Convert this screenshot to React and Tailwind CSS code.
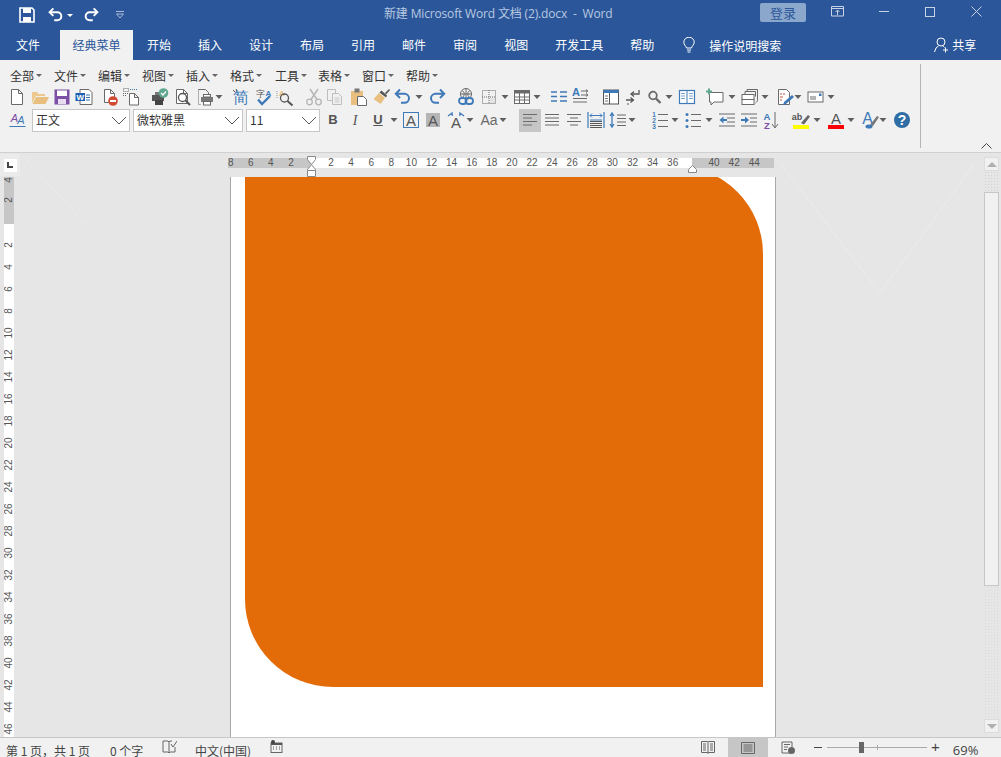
import React from "react";

const Svg = ({ c = "", children }) => (
  <svg viewBox="0 0 18 18" className={`w-[18px] h-[18px] shrink-0 block overflow-visible ${c}`} fill="none">{children}</svg>
);
const G = "#6a6a6a", B = "#3f7ab8", T = "#e8bf7f", P = "#7d4fa6";
const Dd = ({ c = "" }) => (
  <svg viewBox="0 0 8 4" className={`w-[8px] h-[4px] shrink-0 block ${c}`}><polygon points="0.5,0 7.5,0 4,4" fill="#5f5f5f" /></svg>
);
const Page = ({ x = 3.5, y = 1.5, w = 11, h = 15, s = G }) => (
  <path d={`M${x} ${y}h${w - 4}l4 4v${h - 4}h-${w}z M${x + w - 4} ${y}v4h4`} stroke={s} fill="#fff" />
);
const L = ({ d, s = G, w = 1, dash }) => <path d={d} stroke={s} strokeWidth={w} strokeDasharray={dash} />;
const Txt = ({ x, y, s = 12, f = G, w = 400, children, anchor = "middle" }) => (
  <text x={x} y={y} fontSize={s} fill={f} fontWeight={w} textAnchor={anchor} fontFamily="Liberation Sans, sans-serif">{children}</text>
);

const New = (p) => <Svg {...p}><Page /></Svg>;
const Open = (p) => <Svg {...p}><path d="M1 15V4h5l1.500 2H14v2H5L1 15z" fill="#eec98f" /><path d="M1.500 16L5 9h13l-3.500 7z" fill={T} /></Svg>;
const Save = (p) => <Svg {...p}><rect x="1.500" y="1.500" width="15" height="15" fill={P} /><rect x="4" y="2.500" width="10" height="5.500" fill="#fff" /><rect x="5" y="11" width="8" height="5" fill="#e8ddf0" /></Svg>;
const WordDoc = (p) => <Svg {...p}><path d="M5 1.500h9l3 3v12H5z" stroke={G} fill="#fff" /><L d="M11 7h4M11 9.500h4M11 12h4" s="#2f6fb5" /><rect x="0.500" y="5" width="9.500" height="8" fill="#1f5fb4" /><Txt x="5.200" y="12" s={8} f="#fff" w={700}>W</Txt></Svg>;
const PrintDel = (p) => <Svg {...p}><Page x={3.500} y={1.500} w={10} h={13} /><circle cx="12" cy="13" r="4.800" fill="#d24a32" /><rect x="9" y="12" width="6" height="2" fill="#fff" /></Svg>;
const CopyDots = (p) => <Svg {...p}><rect x="1.500" y="0.500" width="5" height="3" stroke={G} strokeDasharray="1 1" /><L d="M1 5.500h5M1 7.500h3" dash="1 1" /><L d="M8 1.500h7" s={B} dash="1 1" /><Page x={7.500} y={5.500} w={9} h={11.500} /></Svg>;
const PrintCheck = (p) => <Svg {...p}><rect x="1" y="7" width="12" height="6" fill="#555" /><rect x="4" y="12" width="8" height="5" fill="#444" /><rect x="4" y="4" width="6" height="3" fill="#777" /><circle cx="12.500" cy="5" r="4.800" fill="#5fa88f" /><path d="M10 5l2 2 3-3.500" stroke="#fff" strokeWidth="1.300" /></Svg>;
const Preview = (p) => <Svg {...p}><Page x={2.500} y={1.500} w={11} h={14} /><circle cx="8.500" cy="9.500" r="4" stroke="#555" strokeWidth="1.300" fill="#fff" /><L d="M11.500 12.500L16 17" s="#555" w={2} /></Svg>;
const PreviewPrint = (p) => <Svg {...p}><path d="M2.500 1.500h7l3 3v2" stroke={G} /><L d="M2.500 1.500v15h3" dash="1 1" /><rect x="5" y="9" width="12" height="5" fill="#777" /><rect x="7.500" y="6.500" width="7" height="2.500" stroke="#666" fill="#fff" /><rect x="7.500" y="13.500" width="7" height="3.500" stroke="#666" fill="#fff" /></Svg>;
const Jian = (p) => <Svg {...p}><Txt x="9" y="15" s={16} f={B}>简</Txt><L d="M1 2l2 2M4 1l1 2" s="#555" /></Svg>;
const ZiCheck = (p) => <Svg {...p}><Txt x="5.500" y="9" s={9} f="#555">字</Txt><Txt x="13.500" y="8" s={8} f={B} w={700}>A</Txt><path d="M3 11.500l4 4.500 8-8" stroke={B} strokeWidth="2.400" /></Svg>;
const FindA = (p) => <Svg {...p}><Txt x="6" y="8" s={8} f={T} w={700}>A</Txt><circle cx="8.500" cy="10" r="4" stroke="#555" strokeWidth="1.300" /><L d="M11.500 13l5 4.500" s="#555" w={2} /><L d="M1 3v8" s="#999" dash="1 1" /></Svg>;
const Cut = (p) => <Svg {...p}><circle cx="4.500" cy="14" r="2.800" stroke="#b5b5b5" strokeWidth="1.300" /><circle cx="13.500" cy="14" r="2.800" stroke="#b5b5b5" strokeWidth="1.300" /><L d="M6 11.500L13 1M12 11.500L5 1" s="#b5b5b5" w={1.500} /></Svg>;
const CopyG = (p) => <Svg {...p}><path d="M1.500 1.500h8v11h-8z" stroke="#bdbdbd" /><path d="M6.500 5.500h6l3 3v8h-9z" stroke="#bdbdbd" fill="#f1f1f1" /><L d="M8.500 10h5M8.500 12h5M8.500 14h5" s="#c9c9c9" /></Svg>;
const Paste = (p) => <Svg {...p}><rect x="1" y="3" width="12" height="14" fill={T} /><rect x="4.500" y="0.500" width="5" height="4" fill="#777" /><path d="M7.500 8.500h6l3 3v6h-9z" stroke={G} fill="#fff" /></Svg>;
const Brush = (p) => <Svg {...p}><path d="M13 5L17 1l1 1-4 4.500z" fill="#555" /><path d="M7 5l6 5-4.500 6L1.500 11z" fill={T} /><path d="M7.500 4.500l6.500 5 1-2-5.500-5z" fill="#555" /></Svg>;
const Undo = (p) => <Svg {...p}><path d="M6 1.500L1.800 5.800 6 10" stroke={B} strokeWidth="2" /><path d="M2.500 5.800h8a4.500 4.500 0 0 1 0 9H7" stroke={B} strokeWidth="2" /></Svg>;
const Redo = (p) => <Svg {...p}><path d="M12 1.500l4.200 4.300L12 10" stroke={B} strokeWidth="2" /><path d="M15.500 5.800h-8a4.500 4.500 0 0 0 0 9H11" stroke={B} strokeWidth="2" /></Svg>;
const WebLink = (p) => <Svg {...p}><circle cx="9" cy="6" r="5.500" stroke={G} /><L d="M3.500 6h11M9 .5v11M5.500 2.500q3.500 3.500 0 7M12.500 2.500q-3.500 3.500 0 7" /><rect x="2" y="10" width="7.500" height="6" rx="3" stroke={B} strokeWidth="1.800" fill="#f1f1f1" /><rect x="8.500" y="10" width="7.500" height="6" rx="3" stroke={B} strokeWidth="1.800" /></Svg>;
const GridDots = (p) => <Svg {...p}><rect x="2.500" y="2.500" width="13" height="13" stroke={G} strokeDasharray="1 1" /><L d="M9 2v14M2 9h14" dash="1 1" /><rect x="10" y="10" width="5" height="5" fill="#e3e3e3" /></Svg>;
const Table = (p) => <Svg {...p}><rect x="1.500" y="2.500" width="15" height="13" stroke={G} fill="#fff" /><rect x="1.500" y="2.500" width="15" height="3" fill={G} /><L d="M6.500 5v10M11.500 5v10M2 9h14M2 12h14" /></Svg>;
const ListCols = (p) => <Svg {...p}><L d="M1 4h6M1 8.500h6M1 13h6M10 4h7M10 8.500h7M10 13h7" s={B} w={1.300} /></Svg>;
const AArrows = (p) => <Svg {...p}><Txt x="5" y="8" s={11} f={B} w={700}>A</Txt><L d="M10 3h6M10 7h6M2 10.500h14M2 14h14" /><L d="M15 1.500l2 1.500-2 1.500M15 5.500l2 1.500-2 1.500" /></Svg>;
const PanelI = (p) => <Svg {...p}><rect x="1.500" y="2" width="15" height="14" stroke="#555" fill="#fff" /><rect x="1.500" y="2" width="15" height="3" fill={B} /><L d="M7.500 5v11" s="#555" /><L d="M3 8h3M3 10.500h3M3 13h3" s="#777" /></Svg>;
const ArrowsI = (p) => <Svg {...p}><path d="M16 2v4H9" stroke="#555" strokeWidth="1.300" /><path d="M11 3.500L8 6l3 2.500" stroke="#555" strokeWidth="1.300" /><path d="M3 12h7M7.500 9.500L10.500 12 7.500 14.500" stroke="#555" strokeWidth="1.300" /><L d="M5 15v2" s="#555" /></Svg>;
const Mag = (p) => <Svg {...p}><circle cx="7" cy="7.500" r="3.800" stroke={G} strokeWidth="1.800" /><L d="M10 10.500l4.500 4.500" w={2.400} /></Svg>;
const BookI = (p) => <Svg {...p}><rect x="1.500" y="2.500" width="15" height="13" stroke={B} fill="#fff" strokeWidth="1.200" /><L d="M9 2.500v13" s={B} /><L d="M3 5.500h4M3 8h4M3 10.500h4M11 5.500h4M11 8h4M11 10.500h4" s="#7aa3cf" /></Svg>;
const CommentI = (p) => <Svg {...p}><path d="M3.500 4.500H17V14H8l-3 3v-3H3.500z" stroke={G} fill="#fff" /><L d="M3 0.500v6M0 3.500h6" s="#5fa88f" w={2} /></Svg>;
const StackI = (p) => <Svg {...p}><path d="M6 4V1.500h10.500v11M4 6V3.500h10.500v5" stroke={G} /><rect x="1" y="6.500" width="12" height="5" stroke={G} fill="#fff" /><rect x="1" y="11.500" width="12" height="5" stroke={G} fill="#fff" /><path d="M13 17l4-4v-2z" fill="#888" /></Svg>;
const EditDoc = (p) => <Svg {...p}><path d="M2.500 1.500h8l3 3v12h-11z" stroke={G} fill="#fff" /><L d="M4 6h2M7 6h2M4 9h3M4 12h2" s="#c8593f" /><path d="M7 17l1-3 8-7 2 2-8 7z" fill={B} /></Svg>;
const Env = (p) => <Svg {...p}><rect x="1" y="4" width="15" height="10" stroke={G} fill="#fff" /><rect x="12" y="5.500" width="2.500" height="2.500" fill={B} /><L d="M3 9h6M3 11h6" /></Svg>;
const Styles = (p) => <Svg {...p}><text x="5.500" y="11" fontSize="11" fontStyle="italic" fill={P} textAnchor="middle" fontFamily="Liberation Sans, sans-serif">A</text><text x="12" y="13" fontSize="11" fontStyle="italic" fill={B} textAnchor="middle" fontFamily="Liberation Sans, sans-serif">A</text><L d="M0.500 15.500h16" s={B} /></Svg>;
const Bold = ({ c }) => <span className={`w-[18px] h-[18px] shrink-0 flex items-center justify-center text-[13px] font-bold text-[#555] font-['Liberation_Sans',sans-serif] ${c}`}>B</span>;
const Ital = ({ c }) => <span className={`w-[18px] h-[18px] shrink-0 flex items-center justify-center text-[14px] italic text-[#555] font-['Liberation_Serif',serif] ${c}`}>I</span>;
const Under = ({ c }) => <span className={`w-[18px] h-[18px] shrink-0 flex items-center justify-center text-[13px] underline font-semibold text-[#555] font-['Liberation_Sans',sans-serif] ${c}`}>U</span>;
const ABox = (p) => <Svg {...p}><rect x="1.500" y="1.500" width="15" height="15" stroke={B} /><Txt x="9" y="14.500" s={15} f="#555">A</Txt></Svg>;
const AShade = (p) => <Svg {...p}><rect x="2" y="2" width="14" height="14" fill="#b5b5b5" /><Txt x="9" y="14.500" s={15} f="#555">A</Txt></Svg>;
const ASpacing = (p) => <Svg {...p}><Txt x="9" y="17" s={15} f="#555">A</Txt><path d="M1 5l4-3v2h1M17 5l-4-3v2h-1" stroke={B} strokeWidth="1.300" /></Svg>;
const Aa = (p) => <Svg {...p}><Txt x="9" y="14" s={14} f={G}>Aa</Txt></Svg>;
const Align = ({ c = "", d }) => <Svg c={c}><L d={d} /></Svg>;
const Justify = (p) => <Svg {...p}><L d="M1 1v16M17 1v16" s={B} w={1.200} /><L d="M3 9h12" s={B} /><L d="M3 10.500h12M3 12.500h12M3 14.500h12M3 16.500h12" s="#555" /><L d="M5 6.500L3 4.500 5 2.500M13 6.500L15 4.500 13 2.500M3 4.500h12" s={B} /></Svg>;
const LineSp = (p) => <Svg {...p}><L d="M3 3v12M1 5l2-3 2 3M1 13l2 3 2-3" s={B} w={1.300} /><L d="M8 4h9M8 7.500h9M8 11h9M8 14.500h9" /></Svg>;
const Numbered = (p) => <Svg {...p}><Txt x="3" y="6" s={6.500} f={B} w={700}>1</Txt><Txt x="3" y="12" s={6.500} f={B} w={700}>2</Txt><Txt x="3" y="18" s={6.500} f={B} w={700}>3</Txt><L d="M7 3.500h10M7 9.500h10M7 15.500h10" /></Svg>;
const Bullets = (p) => <Svg {...p}><circle cx="3" cy="3.500" r="1.500" fill={B} /><circle cx="3" cy="9.500" r="1.500" fill={B} /><circle cx="3" cy="15.500" r="1.500" fill={B} /><L d="M7 3.500h10M7 9.500h10M7 15.500h10" /></Svg>;
const Outdent = (p) => <Svg {...p}><L d="M1 3h16M9 7h8M9 11h8M1 15h16" /><path d="M5.500 5.500L1.500 9l4 3.500z" fill={B} /><L d="M5 9h4" s={B} w={2} /></Svg>;
const Indent = (p) => <Svg {...p}><L d="M1 3h16M10 7h7M10 11h7M1 15h16" /><path d="M5 5.500L9 9l-4 3.500z" fill={B} /><L d="M1 9h5" s={B} w={2} /></Svg>;
const Sort = (p) => <Svg {...p}><Txt x="5" y="8.500" s={9.500} f={B} w={700}>A</Txt><Txt x="5" y="17.500" s={9.500} f={P} w={700}>Z</Txt><L d="M13 1v15M10 13l3 4 3-4" /></Svg>;
const Highlight = (p) => <Svg {...p}><Txt x="5" y="9" s={9} f="#555" w={700}>ab</Txt><path d="M9 12l7-8 2 1.500-6 8z" fill="#666" /><rect x="1" y="14" width="16" height="4" fill="#ffff00" /></Svg>;
const FontCol = (p) => <Svg {...p}><Txt x="9" y="13" s={15} f="#555">A</Txt><rect x="1" y="14" width="16" height="4" fill="#ff0000" /></Svg>;
const Effects = (p) => <Svg {...p}><Txt x="6.500" y="13" s={16} f={B}>A</Txt><path d="M9 14l7-9 2 1-6 9z" fill="#777" /><ellipse cx="8" cy="15.500" rx="3.500" ry="2" fill={B} /></Svg>;
const Help = (p) => <Svg {...p}><circle cx="9" cy="9" r="8" fill="#2f6ea5" /><Txt x="9" y="14" s={14} f="#fff" w={700}>?</Txt></Svg>;

const Combo = ({ c, text }) => (
  <div className={`h-[23px] bg-white border border-[#c6c6c6] flex items-center justify-between pl-[3px] pr-[2px] shrink-0 ${c}`}>
    <span className="text-[12px] text-[#333] leading-none">{text}</span>
    <svg viewBox="0 0 16 9" className="w-[16px] h-[9px] block"><path d="M1 1l7 7 7-7" stroke="#555" fill="none" /></svg>
  </div>
);
const Menu = ({ t, c }) => (
  <div className={`flex items-center shrink-0 ${c}`}>
    <span className="text-[12px] text-[#333] leading-none">{t}</span>
    <svg viewBox="0 0 6 3" className="w-[6px] h-[3px] ml-[2px] block"><polygon points="0,0 6,0 3,3" fill="#666" /></svg>
  </div>
);
const Tab = ({ t, c = "ml-[27px]" }) => <span className={`text-[12px] text-white leading-none shrink-0 ${c}`}>{t}</span>;
const Num = ({ n, c = "w-[20.1px]" }) => <span className={`${c} shrink-0 text-center text-[10px] leading-none text-[#555] font-['Liberation_Sans',sans-serif]`}>{n}</span>;
const VN = ({ n }) => (
  <div className="h-[22px] flex items-center justify-center shrink-0">
    <span className="block -rotate-90 text-[10px] leading-none text-[#555] font-['Liberation_Sans',sans-serif]">{n}</span>
  </div>
);

export default function App() {
  return (
    <div className="w-[1001px] h-[757px] overflow-hidden flex flex-col bg-[#e6e6e6] font-['Noto_Sans_CJK_SC',sans-serif]">
      {/* title bar */}
      <div className="h-[30px] bg-[#2b579a] flex items-center shrink-0">
        <div className="w-[384px] flex items-center pl-[19px] shrink-0">
          <svg viewBox="0 0 16 16" className="w-[16px] h-[16px] block"><path d="M1 1h12l2 2v12H1z" stroke="#fff" strokeWidth="1.600" fill="none" /><rect x="4" y="1" width="8" height="5" fill="#fff" /><rect x="4" y="10" width="8" height="5" fill="#fff" /></svg>
          <svg viewBox="0 0 18 18" className="w-[16px] h-[16px] ml-[13px] block"><path d="M6 1.500L1.800 5.800 6 10" stroke="#fff" strokeWidth="2.200" fill="none" /><path d="M2.500 5.800h8a4.500 4.500 0 0 1 0 9H7" stroke="#fff" strokeWidth="2.200" fill="none" /></svg>
          <svg viewBox="0 0 6 3" className="w-[6px] h-[3px] ml-[3px] block"><polygon points="0,0 6,0 3,3" fill="#fff" /></svg>
          <svg viewBox="0 0 18 18" className="w-[16px] h-[16px] ml-[10px] block"><path d="M12 1.500l4.200 4.300L12 10" stroke="#fff" strokeWidth="2.200" fill="none" /><path d="M15.500 5.800h-8a4.500 4.500 0 0 0 0 9H11" stroke="#fff" strokeWidth="2.200" fill="none" /></svg>
          <svg viewBox="0 0 8 8" className="w-[8px] h-[8px] ml-[17px] block"><path d="M0 .5h8M.5 3l3.500 4 3.500-4z" stroke="#a9bcd9" fill="none" /></svg>
        </div>
        <div className="w-[376px] mb-[2px] shrink-0 text-[12px] text-[#b9c8e0] whitespace-pre leading-none tracking-[-0.16px] font-['Open_Sans','Noto_Sans_CJK_SC',sans-serif]">新建 Microsoft Word 文档 (2).docx  -  Word</div>
        <div className="w-[46px] h-[19px] mb-[6px] rounded-[2px] bg-[#8ba7cc] text-[#2b579a] text-[13px] leading-none flex items-center justify-center shrink-0">登录</div>
        <svg viewBox="0 0 14 11" className="w-[14px] h-[11px] ml-[25px] mb-[7px] block shrink-0"><path d="M.5.5h12v9.500H.5zM.5 2.500h12M6.500 9V4.500M4.500 6l2-2 2 2" stroke="#c8d4e6" fill="none" /></svg>
        <div className="w-[10px] h-px bg-[#c8d4e6] ml-[34px] mb-[7px] shrink-0" />
        <div className="w-[10px] h-[10px] border border-[#c8d4e6] ml-[36px] mb-[7px] shrink-0" />
        <svg viewBox="0 0 11 11" className="w-[11px] h-[11px] ml-[36px] mb-[7px] block shrink-0"><path d="M.5.5l10 10M10.500.5l-10 10" stroke="#c8d4e6" fill="none" /></svg>
      </div>
      {/* tabs */}
      <div className="h-[30px] bg-[#2b579a] flex items-center pl-[16px] shrink-0">
        <Tab t="文件" c="" />
        <div className="w-[73px] h-[30px] ml-[20px] bg-[#f1f1f1] text-[#2b579a] text-[12px] flex items-center justify-center shrink-0">经典菜单</div>
        <Tab t="开始" c="ml-[14px]" />
        <Tab t="插入" /><Tab t="设计" /><Tab t="布局" /><Tab t="引用" /><Tab t="邮件" /><Tab t="审阅" /><Tab t="视图" /><Tab t="开发工具" /><Tab t="帮助" />
        <svg viewBox="0 0 12 16" className="w-[12px] h-[16px] ml-[29px] block shrink-0"><path d="M3.500 11C3 8.500.8 8 .8 5.200a5.200 5 0 0 1 10.400 0C11.200 8 9 8.500 8.500 11zM4 13h4M4.500 15h3" stroke="#fff" fill="none" /></svg>
        <span className="ml-[14px] mt-[2px] text-[12px] text-white leading-none w-[73px] shrink-0 whitespace-nowrap">操作说明搜索</span>
        <svg viewBox="0 0 14 16" className="w-[14px] h-[16px] ml-[152px] block shrink-0"><circle cx="7" cy="5" r="4" stroke="#fff" fill="none" /><path d="M.5 15q1-5 4-6M8.500 9q1 .3 2 1.500M9 13h5M11.500 10.500v5" stroke="#fff" fill="none" /></svg>
        <span className="ml-[4px] text-[12px] text-white leading-none shrink-0">共享</span>
      </div>
      {/* ribbon */}
      <div className="h-[93px] bg-[#f1f1f1] border-b border-[#d0d0d0] flex shrink-0">
        <div className="w-[920px] pt-[5px] shrink-0">
          <div className="h-[21px] flex items-center pl-[10px]">
            <Menu t="全部" c="w-[44px]" /><Menu t="文件" c="w-[44px]" /><Menu t="编辑" c="w-[44px]" /><Menu t="视图" c="w-[44px]" /><Menu t="插入" c="w-[44px]" /><Menu t="格式" c="w-[45px]" /><Menu t="工具" c="w-[43px]" /><Menu t="表格" c="w-[44px]" /><Menu t="窗口" c="w-[44px]" /><Menu t="帮助" c="w-[44px]" />
          </div>
          <div className="h-[22px] flex items-center pl-[8px]">
            <New /><Open c="ml-[5px]" /><Save c="ml-[4px]" /><WordDoc c="ml-[4px]" /><PrintDel c="ml-[8px]" /><CopyDots c="ml-[3px]" /><PrintCheck c="ml-[11px]" /><Preview c="ml-[5px]" /><PreviewPrint c="ml-[4px]" /><Dd c="ml-[1px]" />
            <Jian c="ml-[9px]" /><ZiCheck c="ml-[5px]" /><FindA c="ml-[3px]" /><Cut c="ml-[11px]" /><CopyG c="ml-[3px]" /><Paste c="ml-[6px]" /><Brush c="ml-[4px]" /><Undo c="ml-[4px]" /><Dd c="ml-[3px]" /><Redo c="ml-[5px]" />
            <WebLink c="ml-[11px]" /><GridDots c="ml-[5px]" /><Dd c="ml-[3px]" /><Table c="ml-[4px]" /><Dd c="ml-[2px]" /><ListCols c="ml-[9px]" /><AArrows c="ml-[3px]" /><PanelI c="ml-[13px]" /><ArrowsI c="ml-[3px]" /><Mag c="ml-[5px]" /><Dd c="ml-[1px]" />
            <BookI c="ml-[5px]" /><CommentI c="ml-[10px]" /><Dd c="ml-[4px]" /><StackI c="ml-[5px]" /><Dd c="ml-[2px]" /><EditDoc c="ml-[7px]" /><Dd c="ml-[0px]" /><Env c="ml-[5px]" /><Dd c="ml-[2px]" />
          </div>
          <div className="h-[24px] flex items-center pl-[9px]">
            <Styles /><Combo c="w-[98px] ml-[5px]" text="正文" /><Combo c="w-[110px] ml-[3px]" text="微软雅黑" /><Combo c="w-[74px] ml-[3px]" text="11" />
            <Bold c="ml-[4px]" /><Ital c="ml-[4px]" /><Under c="ml-[5px]" /><Dd c="ml-[3px]" />
            <ABox c="ml-[4px]" /><AShade c="ml-[4px]" /><ASpacing c="ml-[5px]" /><Dd c="ml-[1px]" /><Aa c="ml-[6px]" /><Dd c="ml-[1px]" />
            <div className="w-[22px] h-[23px] ml-[12px] bg-[#c6c6c6] flex items-center justify-center shrink-0"><Align d="M2 3.500h14M2 7h9M2 10.500h14M2 14h9" /></div>
            <Align c="ml-[2px]" d="M2 3.500h14M2 7h14M2 10.500h14M2 14h14" /><Align c="ml-[4px]" d="M2 3.500h14M5 7h8M2 10.500h14M5 14h8" /><Justify c="ml-[4px]" /><LineSp c="ml-[4px]" /><Dd c="ml-[1px]" />
            <Numbered c="ml-[15px]" /><Dd c="ml-[2px]" /><Bullets c="ml-[5px]" /><Dd c="ml-[3px]" /><Outdent c="ml-[5px]" /><Indent c="ml-[4px]" /><Sort c="ml-[4px]" /><Highlight c="ml-[12px]" /><Dd c="ml-[3px]" /><FontCol c="ml-[6px]" /><Dd c="ml-[2px]" /><Effects c="ml-[6px]" /><Dd c="ml-[0px]" /><Help c="ml-[6px]" />
          </div>
        </div>
        <div className="w-px my-[4px] bg-[#b5b5b5] shrink-0" />
        <div className="flex-1 flex items-end justify-end pr-[9px] pb-[3px]">
          <svg viewBox="0 0 11 6" className="w-[11px] h-[6px] block"><path d="M.5 5.500L5.500.5l5 5" stroke="#444" fill="none" /></svg>
        </div>
      </div>
      {/* document area */}
      <div className="relative flex-1 flex min-h-0 bg-[#e6e6e6]">
        <svg className="absolute inset-0 w-full h-full pointer-events-none" viewBox="0 0 1001 584">
          <path d="M22 2l63 69 38-40M780 10l100 130 95-130" stroke="#eaedeb" strokeWidth="1" fill="none" />
        </svg>
        <div className="relative w-[984px] flex flex-col shrink-0">
          {/* horizontal ruler */}
          <div className="relative h-[24px] flex items-start shrink-0">
            <div className="w-[20px] h-[22px] bg-[#ebebeb] flex items-center justify-center shrink-0 mt-[1px]">
              <div className="w-[13px] h-[13px] bg-white flex items-center justify-center">
                <div className="w-[6px] h-[6px] border-l-2 border-b-2 border-[#444]" />
              </div>
            </div>
            <div className="ml-[208px] mt-[5px] flex h-[10px] items-center shrink-0">
              <div className="w-[83px] h-[10px] bg-[#c6c6c6] flex items-center justify-end pr-[10px] shrink-0">
                <Num n="8" /><Num n="6" /><Num n="4" /><Num n="2" />
              </div>
              <div className="w-[381px] h-[10px] bg-white flex items-center pl-[10px] shrink-0">
                {[2, 4, 6, 8, 10, 12, 14, 16, 18, 20, 22, 24, 26, 28, 30, 32, 34, 36].map((n) => <Num key={n} n={n} />)}
              </div>
              <div className="w-[82px] h-[10px] bg-[#c6c6c6] flex items-center pl-[12px] shrink-0">
                <Num n="40" /><Num n="42" /><Num n="44" />
              </div>
            </div>
            <svg viewBox="0 0 9 21" className="absolute left-[307px] top-[3px] w-[9px] h-[21px] block"><path d="M.5.5h8v3l-4 5 4 5v1h-8v-1l4-5-4-5zM.5 14.500h8v6h-8z" stroke="#888" fill="#fff" /></svg>
            <svg viewBox="0 0 9 8" className="absolute left-[688px] top-[12px] w-[9px] h-[8px] block"><path d="M4.500.5l4 4v3h-8v-3z" stroke="#888" fill="#fff" /></svg>
          </div>
          {/* ruler and page */}
          <div className="relative flex flex-1 min-h-0">
            <div className="w-[230px] pl-[4px] shrink-0">
              <div className="w-[10px] h-[560px] flex flex-col overflow-hidden">
                <div className="h-[47px] bg-[#c6c6c6] overflow-hidden shrink-0">
                  <div className="-mt-[8px]"><VN n="4" /><div className="-mt-[2px]"><VN n="2" /></div></div>
                </div>
                <div className="flex-1 bg-white pt-[10px] min-h-0 overflow-hidden">
                  {[2, 4, 6, 8, 10, 12, 14, 16, 18, 20, 22, 24, 26, 28, 30, 32, 34, 36, 38, 40, 42, 44, 46].map((n) => <VN key={n} n={n} />)}
                </div>
              </div>
            </div>
            <div className="w-[546px] h-[560px] bg-white border-x border-[#a8a8a8] overflow-hidden shrink-0 pl-[14px]">
              <div className="w-[518px] h-[521px] -mt-[11px] bg-[#e36c09] rounded-tr-[88px] rounded-bl-[88px]" />
            </div>
          </div>
        </div>
        {/* scrollbar */}
        <div className="relative w-[15px] flex flex-col items-stretch pt-[4px] pb-[4px] shrink-0">
          <div className="h-[14px] bg-[#f1f1f1] border border-[#dcdcdc] flex items-center justify-center shrink-0">
            <div className="w-0 h-0 border-x-[5px] border-x-transparent border-b-[5px] border-b-[#b0b0b0]" />
          </div>
          <div className="h-[21px] shrink-0 bg-[radial-gradient(#d2d2d2_1px,transparent_1px)] bg-[length:3px_3px]" />
          <div className="h-[394px] bg-[#f1f1f1] border border-[#c6c6c6] shrink-0" />
          <div className="flex-1 bg-[radial-gradient(#dadada_1px,transparent_1px)] bg-[length:3px_3px]" />
          <div className="h-[14px] bg-[#f1f1f1] border border-[#dcdcdc] flex items-center justify-center shrink-0">
            <div className="w-0 h-0 border-x-[5px] border-x-transparent border-t-[5px] border-t-[#b0b0b0]" />
          </div>
        </div>
      </div>
      {/* status bar */}
      <div className="h-[20px] bg-[#f1f1f1] border-t border-[#c6c6c6] flex items-center shrink-0 overflow-hidden text-[12px] text-[#444] leading-none">
        <span className="ml-[6px] mt-[6px] w-[104px] shrink-0 whitespace-pre">第 1 页，共 1 页</span>
        <span className="mt-[6px] w-[52px] shrink-0 whitespace-pre">0 个字</span>
        <svg viewBox="0 0 15 13" className="w-[15px] h-[13px] block shrink-0 -mt-[2px]"><path d="M1 1h5l1 1v11l-1-1H1zM7 2l1-1h2M7 13l1-1h5V7M9 4l2 3 4-6" stroke="#666" fill="none" /></svg>
        <span className="ml-[18px] mt-[6px] w-[75px] shrink-0">中文(中国)</span>
        <svg viewBox="0 0 13 13" className="w-[13px] h-[13px] block shrink-0 -mt-[2px]"><rect x="1" y="3" width="11" height="9.500" fill="none" stroke="#666" /><rect x="1" y="3" width="11" height="2" fill="#555" /><circle cx="3" cy="2" r="2" fill="#444" /><path d="M3 7h1M6 7h1M9 7h1M3 9h1M6 9h1M9 9h1" stroke="#555" /></svg>
        <svg viewBox="0 0 14 13" className="w-[14px] h-[13px] ml-[418px] block shrink-0"><path d="M.5.5h6l.5.5.5-.5h6v11h-6l-.5 1-.5-1h-6zM7 1v11M2 3h3M2 5h3M2 7h3M2 9h3M9 3h3M9 5h3M9 7h3M9 9h3" stroke="#666" fill="none" /></svg>
        <div className="w-[40px] h-[20px] ml-[13px] bg-[#c6c6c6] flex items-center justify-center shrink-0">
          <svg viewBox="0 0 14 12" className="w-[14px] h-[12px] block"><path d="M.5.5h13v11H.5zM2.500 3h9M2.500 5h9M2.500 7h9M2.500 9h9" stroke="#666" fill="none" /></svg>
        </div>
        <svg viewBox="0 0 14 13" className="w-[14px] h-[13px] ml-[13px] block shrink-0"><path d="M9 12H1V1h10v5M3 3.500h6M3 6h4M3 8.500h3" stroke="#666" fill="none" /><circle cx="10.500" cy="9.500" r="3.500" fill="#666" /></svg>
        <div className="w-[8px] h-px bg-[#444] ml-[19px] shrink-0" />
        <div className="relative w-[100px] h-px bg-[#aaa] ml-[5px] shrink-0">
          <div className="absolute left-[32px] -top-[5px] w-[5px] h-[11px] bg-[#666]" />
          <div className="absolute left-[50px] -top-[2px] w-px h-[5px] bg-[#aaa]" />
        </div>
        <span className="ml-[4px] text-[15px] text-[#444] leading-none shrink-0 -mt-[3px] font-['Liberation_Sans',sans-serif]">+</span>
        <span className="ml-[13px] mt-[5px] text-[13px] shrink-0 font-['Open_Sans',sans-serif]">69%</span>
      </div>
    </div>
  );
}
